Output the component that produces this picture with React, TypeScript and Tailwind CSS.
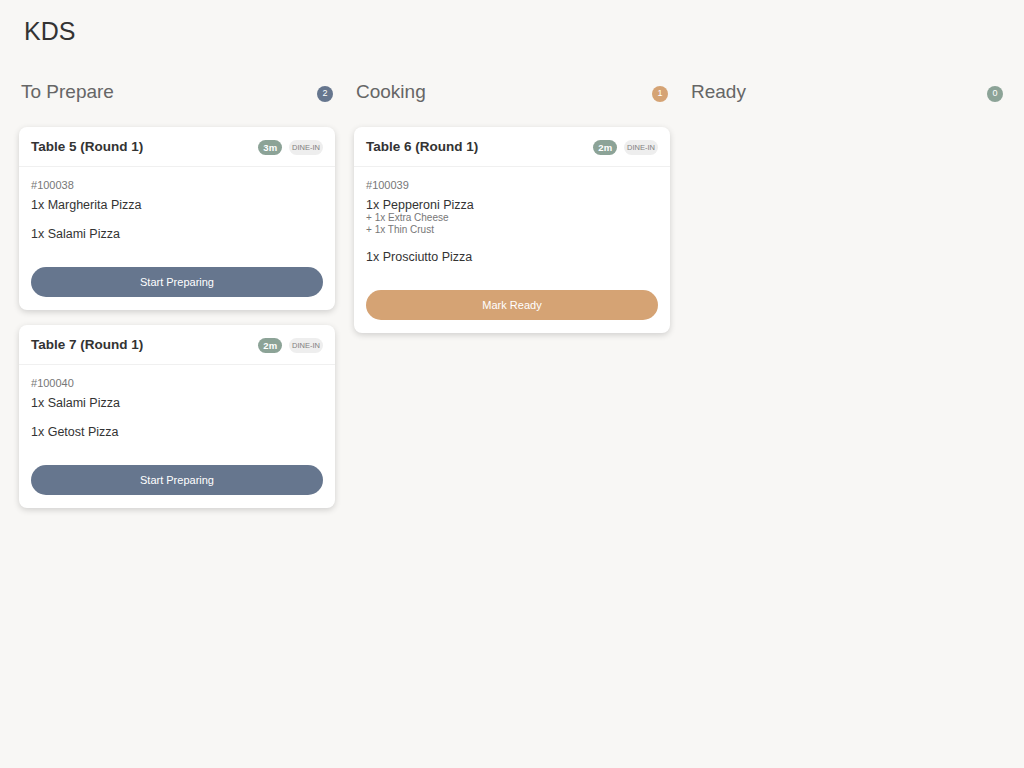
import React from 'react';

type Item = {
  qty: number;
  name: string;
  mods?: string[];
};

type Ticket = {
  id: string;
  table: string;
  age: string;
  items: Item[];
};

type Column = {
  title: string;
  badge: string;
  action: string;
  button: string;
  tickets: Ticket[];
};

const columns: Column[] = [
  {
    title: 'To Prepare',
    badge: 'bg-[#66768e]',
    action: 'Start Preparing',
    button: 'bg-[#66768e]',
    tickets: [
      {
        id: '100038',
        table: 'Table 5 (Round 1)',
        age: '3m',
        items: [
          { qty: 1, name: 'Margherita Pizza' },
          { qty: 1, name: 'Salami Pizza' },
        ],
      },
      {
        id: '100040',
        table: 'Table 7 (Round 1)',
        age: '2m',
        items: [
          { qty: 1, name: 'Salami Pizza' },
          { qty: 1, name: 'Getost Pizza' },
        ],
      },
    ],
  },
  {
    title: 'Cooking',
    badge: 'bg-[#d5a374]',
    action: 'Mark Ready',
    button: 'bg-[#d5a374]',
    tickets: [
      {
        id: '100039',
        table: 'Table 6 (Round 1)',
        age: '2m',
        items: [
          { qty: 1, name: 'Pepperoni Pizza', mods: ['1x Extra Cheese', '1x Thin Crust'] },
          { qty: 1, name: 'Prosciutto Pizza' },
        ],
      },
    ],
  },
  {
    title: 'Ready',
    badge: 'bg-[#8ca397]',
    action: 'Serve',
    button: 'bg-[#8ca397]',
    tickets: [],
  },
];

const TicketCard: React.FC<{ ticket: Ticket; action: string; button: string }> = ({
  ticket,
  action,
  button,
}) => (
  <div className="bg-white rounded-lg shadow-[0_2px_6px_rgba(0,0,0,0.16)] overflow-hidden">
    <div className="h-10 px-3 pt-px flex items-center justify-between border-b border-[#f0f0f0]">
      <div className="font-bold text-[13.5px] text-[#333]">{ticket.table}</div>
      <div className="flex items-center gap-[7px]">
        <span className="h-[15px] px-[5px] rounded-full bg-[#8ca397] text-white text-[9.5px] font-bold leading-[15px]">
          {ticket.age}
        </span>
        <span className="h-[15px] px-[3px] rounded-full bg-[#eeeeee] text-[#808080] text-[7.5px] leading-[15px]">
          DINE-IN
        </span>
      </div>
    </div>
    <div className="px-3 pt-[11px] pb-[13px]">
      <div className="text-[11px] leading-[14px] text-[#777] mb-[5px]">#{ticket.id}</div>
      <ul className="flex flex-col gap-[13px]">
        {ticket.items.map((item) => (
          <li key={item.name}>
            <div className="text-[12.5px] leading-4 text-[#333]">
              {item.qty}x {item.name}
            </div>
            {item.mods && (
              <div className="-mt-px">
                {item.mods.map((mod) => (
                  <div key={mod} className="text-[10px] leading-3 text-[#777]">
                    + {mod}
                  </div>
                ))}
              </div>
            )}
          </li>
        ))}
      </ul>
      <button
        className={`${button} mt-[25px] w-full h-[30px] rounded-full text-white text-[11px]`}
      >
        {action}
      </button>
    </div>
  </div>
);

const App: React.FC = () => {
  return (
    <div className="min-h-screen bg-[#f8f7f5] px-[19px] pt-[16px] font-['Liberation_Sans',Arial,sans-serif]">
      <h1 className="pl-[5px] text-[25px] leading-[30px] text-[#333]">KDS</h1>
      <div className="mt-[30px] grid grid-cols-3 gap-[19px]">
        {columns.map((col) => (
          <section key={col.title}>
            <div className="mt-[2px] px-[2px] flex items-start justify-between mb-[21px]">
              <h3 className="text-[19px] leading-7 text-[#666]">{col.title}</h3>
              <span
                className={`${col.badge} mt-[8px] w-4 h-4 rounded-full text-white text-[9px] flex items-center justify-center`}
              >
                {col.tickets.length}
              </span>
            </div>
            <div className="flex flex-col gap-[15px]">
              {col.tickets.map((t) => (
                <TicketCard key={t.id} ticket={t} action={col.action} button={col.button} />
              ))}
            </div>
          </section>
        ))}
      </div>
    </div>
  );
};

export default App;
